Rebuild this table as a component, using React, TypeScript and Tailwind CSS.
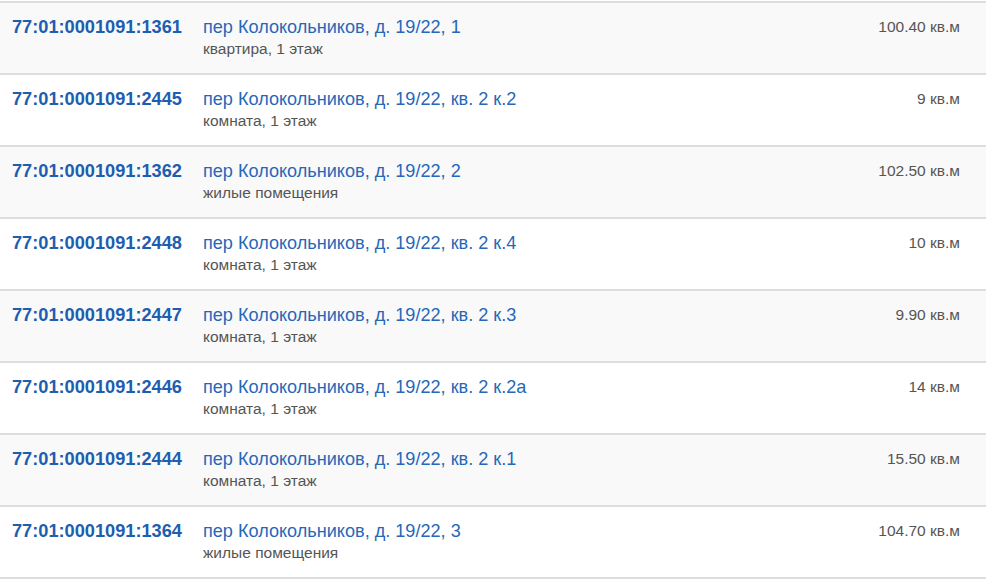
const rows = [
  { num: "77:01:0001091:1361", addr: "пер Колокольников, д. 19/22, 1", kind: "квартира, 1 этаж", area: "100.40" },
  { num: "77:01:0001091:2445", addr: "пер Колокольников, д. 19/22, кв. 2 к.2", kind: "комната, 1 этаж", area: "9" },
  { num: "77:01:0001091:1362", addr: "пер Колокольников, д. 19/22, 2", kind: "жилые помещения", area: "102.50" },
  { num: "77:01:0001091:2448", addr: "пер Колокольников, д. 19/22, кв. 2 к.4", kind: "комната, 1 этаж", area: "10" },
  { num: "77:01:0001091:2447", addr: "пер Колокольников, д. 19/22, кв. 2 к.3", kind: "комната, 1 этаж", area: "9.90" },
  { num: "77:01:0001091:2446", addr: "пер Колокольников, д. 19/22, кв. 2 к.2а", kind: "комната, 1 этаж", area: "14" },
  { num: "77:01:0001091:2444", addr: "пер Колокольников, д. 19/22, кв. 2 к.1", kind: "комната, 1 этаж", area: "15.50" },
  { num: "77:01:0001091:1364", addr: "пер Колокольников, д. 19/22, 3", kind: "жилые помещения", area: "104.70" },
];

export default function App() {
  return (
    <div className="h-[585px] w-[1000px] overflow-hidden bg-white pt-px font-['Liberation_Sans',Arial,sans-serif]">
      <div className="w-[986px] border-b-2 border-[#dddddd]">
        {rows.map((r, i) => (
          <div
            key={r.num}
            className={`flex h-[72px] border-t-2 border-[#dddddd] ${i % 2 === 0 ? "bg-[#f9f9f9]" : "bg-white"}`}
          >
            <div className="w-[203px] shrink-0 pl-3 pt-[12px] text-[18.2px] leading-6 font-bold text-[#1c5eb0]">
              {r.num}
            </div>
            <div className="flex-1 pt-[12px]">
              <div className="text-[18.1px] leading-6 text-[#2767b8]">{r.addr}</div>
              <div className="text-[15.5px] leading-5 text-[#555555]">{r.kind}</div>
            </div>
            <div className="pr-[26px] pt-[12px] text-[15.5px] leading-6 text-[#555555]">
              {r.area} кв.м
            </div>
          </div>
        ))}
      </div>
    </div>
  );
}
